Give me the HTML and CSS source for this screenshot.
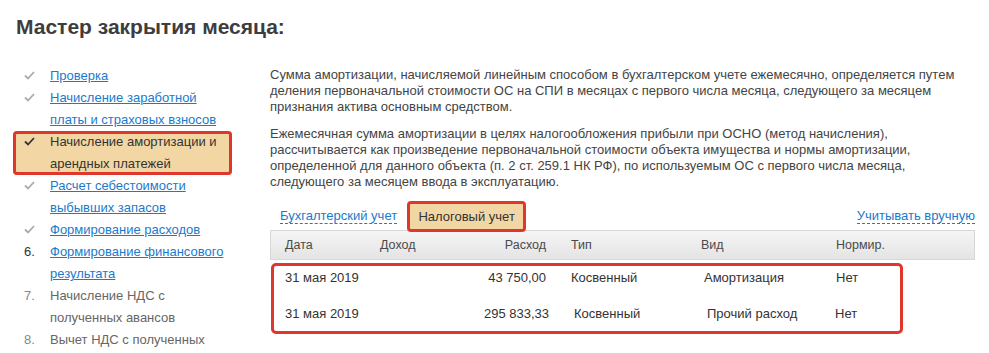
FILE: index.html
```html
<!DOCTYPE html>
<html lang="ru">
<head>
  <meta charset="UTF-8">
  <title>Мастер закрытия месяца</title>
  <link rel="stylesheet" href="styles.css">
</head>
<body>
  <h1 class="title">Мастер закрытия месяца:</h1>
  <div class="main">
    <div class="steps">
      <div class="step">
        <span class="mark done"><svg width="11" height="9" viewBox="0 0 11 9"><path d="M1 4.5 L4 7.5 L10 1"/></svg></span>
        <a href="#">Проверка</a>
      </div>
      <div class="step">
        <span class="mark done"><svg width="11" height="9" viewBox="0 0 11 9"><path d="M1 4.5 L4 7.5 L10 1"/></svg></span>
        <a href="#">Начисление заработной<br>платы и страховых взносов</a>
      </div>
      <div class="step current">
        <span class="mark"><svg width="11" height="9" viewBox="0 0 11 9"><path d="M1 4.5 L4 7.5 L10 1"/></svg></span>
        <span>Начисление амортизации и<br>арендных платежей</span>
      </div>
      <div class="step">
        <span class="mark done"><svg width="11" height="9" viewBox="0 0 11 9"><path d="M1 4.5 L4 7.5 L10 1"/></svg></span>
        <a href="#">Расчет себестоимости<br>выбывших запасов</a>
      </div>
      <div class="step">
        <span class="mark done"><svg width="11" height="9" viewBox="0 0 11 9"><path d="M1 4.5 L4 7.5 L10 1"/></svg></span>
        <a href="#">Формирование расходов</a>
      </div>
      <div class="step">
        <span class="mark num">6.</span>
        <a href="#">Формирование финансового<br>результата</a>
      </div>
      <div class="step todo">
        <span class="mark num">7.</span>
        <span>Начисление НДС с<br>полученных авансов</span>
      </div>
      <div class="step todo">
        <span class="mark num">8.</span>
        <span>Вычет НДС с полученных</span>
      </div>
    </div>

    <div class="content">
      <p>Сумма амортизации, начисляемой линейным способом в бухгалтерском учете ежемесячно, определяется путем<br>
      деления первоначальной стоимости ОС на СПИ в месяцах с первого числа месяца, следующего за месяцем<br>
      признания актива основным средством.</p>
      <p>Ежемесячная сумма амортизации в целях налогообложения прибыли при ОСНО (метод начисления),<br>
      рассчитывается как произведение первоначальной стоимости объекта имущества и нормы амортизации,<br>
      определенной для данного объекта (п. 2 ст. 259.1 НК РФ), по используемым ОС с первого числа месяца,<br>
      следующего за месяцем ввода в эксплуатацию.</p>

      <div class="tabs">
        <a href="#" class="tab-link">Бухгалтерский учет</a>
        <span class="tab-active">Налоговый учет</span>
        <a href="#" class="tab-link manual">Учитывать вручную</a>
      </div>

      <div class="grid-head">
        <span>Дата</span>
        <span>Доход</span>
        <span class="num-cell">Расход</span>
        <span>Тип</span>
        <span>Вид</span>
        <span>Нормир.</span>
      </div>
      <div class="rows">
        <div class="row">
          <span>31 мая 2019</span>
          <span></span>
          <span class="num-cell">43 750,00</span>
          <span>Косвенный</span>
          <span>Амортизация</span>
          <span>Нет</span>
        </div>
        <div class="row second">
          <span>31 мая 2019</span>
          <span></span>
          <span class="num-cell">295 833,33</span>
          <span>Косвенный</span>
          <span>Прочий расход</span>
          <span>Нет</span>
        </div>
      </div>
    </div>
  </div>
</body>
</html>
```

FILE: styles.css
```css
body {
  margin: 0;
  font-family: 'Liberation Sans', Arial, sans-serif;
  color: #444;
  background: #fff;
}

a {
  color: #1b7acb;
}

.title {
  margin: 0;
  padding: 12px 16px 0;
  font-size: 21px;
  line-height: 30px;
  font-weight: bold;
  color: #3d3d3d;
}

.main {
  display: flex;
  padding-top: 23px;
}

.steps {
  flex: 0 0 270px;
  box-sizing: border-box;
  padding-left: 13px;
  font-size: 13px;
  line-height: 22px;
}

.step {
  display: flex;
  width: 219px;
  padding-left: 11px;
  box-sizing: border-box;
}

.step.current {
  background-color: #f2d7a5;
  box-shadow: inset 0 0 0 3px #e0372d;
  border-radius: 4px;
  color: #333;
}

.step.todo {
  color: #666;
}

.mark {
  flex: 0 0 26px;
}

.mark svg {
  fill: none;
  stroke: #333;
  stroke-width: 1.8;
  margin-top: 5px;
}

.mark.done svg {
  stroke: #aaa;
}

.mark.num {
  color: #333;
}

.step.todo .mark.num {
  color: #888;
}

.content {
  width: 705px;
  padding-top: 2px;
  font-size: 13px;
  line-height: 16px;
}

.content p {
  margin: 0 0 11px;
}

.tabs {
  display: flex;
  align-items: flex-start;
  height: 29px;
  padding-left: 10px;
  font-size: 13px;
}

.tab-link {
  text-decoration: none;
  border-bottom: 1px dashed #1b7acb;
  height: 22px;
  line-height: 30px;
}

.tab-active {
  position: relative;
  z-index: 1;
  width: 119px;
  height: 31px;
  margin-left: 10px;
  box-sizing: border-box;
  text-align: center;
  background-color: #f2d7a5;
  border: 3px solid #e0372d;
  border-radius: 4px;
  line-height: 25px;
  color: #333;
}

.tab-link.manual {
  margin-left: auto;
}

.grid-head,
.row {
  display: grid;
  grid-template-columns: 95px 80px 86px 155px 135px 1fr;
}

.grid-head {
  height: 30px;
  box-sizing: border-box;
  padding-left: 14px;
  align-items: center;
  border: 1px solid #d7d7d7;
  background: linear-gradient(#f5f5f5, #e4e4e4);
  font-size: 12.5px;
  color: #4a4a4a;
}

.num-cell {
  text-align: right;
}

.grid-head span:nth-child(4),
.row span:nth-child(4) {
  padding-left: 25px;
}

.row span:nth-child(5) {
  padding-left: 3px;
}

.rows {
  width: 632px;
  box-sizing: border-box;
  margin: 3px 0 0 1px;
  padding: 0 0 5px 11px;
  border: 3px solid #e0372d;
  border-radius: 5px;
  font-size: 13px;
  color: #333;
}

.row {
  line-height: 24px;
}

.row + .row {
  margin-top: 12px;
}

.row.second {
  grid-template-columns: 95px 80px 89px 155px 131px 1fr;
}
```
